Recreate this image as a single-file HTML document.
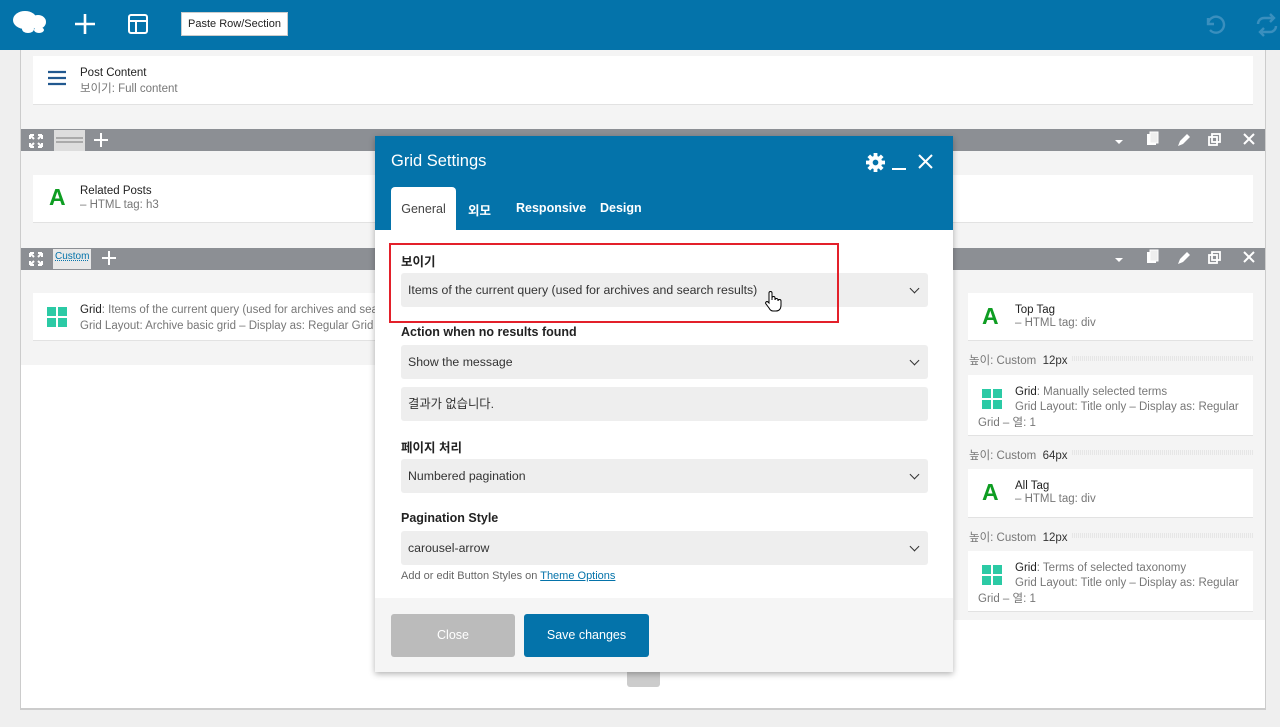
<!DOCTYPE html>
<html><head><meta charset="utf-8"><style>
*{box-sizing:border-box;margin:0;padding:0}
body{width:1280px;height:727px;overflow:hidden;background:#efefef;font-family:"Liberation Sans","Noto Sans CJK KR",sans-serif;font-size:12px;color:#333;position:relative}
.a{position:absolute}
.top{left:0;top:0;width:1280px;height:50px;background:#0473aa}
.bar{background:#8c8f94;height:22px}
.card{background:#fff;border-bottom:1px solid #e2e2e2}
.t{font-size:11.5px;color:#222}
.s{font-size:11.5px;color:#777}
.sel{background:#eee;border-radius:3px;font-size:12.3px;color:#333;padding-left:7px;line-height:34px;height:34px;width:527px;left:401px}
.sel:after{content:"";position:absolute;right:10px;top:12px;width:6px;height:6px;border-right:1.5px solid #333;border-bottom:1.5px solid #333;transform:rotate(45deg)}
.lbl{font-size:12.5px;color:#222;left:401px;font-weight:bold}
.gi{width:20px;height:20px;display:grid;grid-template-columns:1fr 1fr;gap:2px}
.gi i{background:#2bcaa5}
.A{font-family:"Liberation Sans",sans-serif;font-weight:bold;color:#0e9d22;font-size:23px}
.sp{font-size:11.5px;color:#777}
.sp b{color:#333;font-weight:normal}
.dots{height:5px;background:repeating-linear-gradient(90deg,#e6e6e6 0 1px,transparent 1px 2px)}
</style></head><body>
<div class="a top"></div>
<svg class="a" style="left:12px;top:9px" width="36" height="28" viewBox="0 0 36 28"><ellipse cx="13" cy="11" rx="12" ry="9" fill="#fff"/><ellipse cx="26" cy="13" rx="8" ry="7" fill="#fff"/><ellipse cx="16" cy="20" rx="6" ry="4" fill="#fff"/><ellipse cx="27" cy="21" rx="5" ry="3" fill="#fff"/></svg>
<svg class="a" style="left:74px;top:13px" width="22" height="22"><path d="M11 1v20M1 11h20" stroke="#fff" stroke-width="2.6"/></svg>
<svg class="a" style="left:127px;top:13px" width="22" height="22"><rect x="2" y="2" width="18" height="18" rx="2" fill="none" stroke="#fff" stroke-width="2"/><path d="M2 8h18M9 8v12" stroke="#fff" stroke-width="2"/></svg>
<div class="a" style="left:181px;top:12px;width:107px;height:24px;background:#fff;border:1px solid #ccc;font-size:11px;line-height:23px;text-align:center;color:#222">Paste Row/Section</div>
<svg class="a" style="left:1201px;top:12px" width="26" height="26"><path d="M7 6v6h6M7 12a8 8 0 1 1 2 6" fill="none" stroke="#3a8fbe" stroke-width="2.4"/></svg>
<svg class="a" style="left:1254px;top:12px" width="26" height="26"><path d="M4 12a6 6 0 0 1 6-6h10M16 2l4 4-4 4M22 14a6 6 0 0 1-6 6H6M10 24l-4-4 4-4" fill="none" stroke="#3a8fbe" stroke-width="2.4"/></svg>

<div class="a" style="left:20px;top:50px;width:1246px;height:660px;background:#fff;border-left:1px solid #ccc;border-right:1px solid #ccc;border-bottom:2px solid #ccc"></div>
<div class="a" style="left:21px;top:50px;width:1244px;height:79px;background:#f4f4f4"></div>
<div class="a card" style="left:33px;top:56px;width:1220px;height:49px"></div>
<svg class="a" style="left:48px;top:70px" width="20" height="18"><path d="M0 2h18M0 8h18M0 14h18" stroke="#21588f" stroke-width="2.2"/></svg>
<div class="a t" style="left:80px;top:67px">Post Content</div>
<div class="a s" style="left:80px;top:80px">보이기: Full content</div>

<div class="a bar" style="left:21px;top:129px;width:1244px"></div>
<svg class="a" style="left:29px;top:134px" width="14" height="14"><path d="M1 1l4 4M13 1l-4 4M1 13l4-4M13 13l-4-4M1 1h4M1 1v4M13 1h-4M13 1v4M1 13h4M1 13v-4M13 13h-4M13 13v-4" stroke="#fff" stroke-width="2"/></svg>
<div class="a" style="left:54px;top:130px;width:31px;height:21px;background:#ddd"><div style="margin:7px 2px;height:6px;border-top:2px solid #aaa;border-bottom:2px solid #aaa"></div></div>
<svg class="a" style="left:94px;top:133px" width="14" height="14"><path d="M7 0v14M0 7h14" stroke="#fff" stroke-width="2"/></svg>
<div class="a" style="left:21px;top:151px;width:1244px;height:97px;background:#f4f4f4"></div>
<div class="a card" style="left:33px;top:175px;width:1220px;height:48px"></div>
<div class="a A" style="left:49px;top:184px">A</div>
<div class="a t" style="left:80px;top:185px">Related Posts</div>
<div class="a s" style="left:80px;top:199px">– HTML tag: h3</div>

<div class="a bar" style="left:21px;top:248px;width:1244px"></div>
<svg class="a" style="left:29px;top:252px" width="14" height="14"><path d="M1 1l4 4M13 1l-4 4M1 13l4-4M13 13l-4-4M1 1h4M1 1v4M13 1h-4M13 1v4M1 13h4M1 13v-4M13 13h-4M13 13v-4" stroke="#fff" stroke-width="2"/></svg>
<div class="a" style="left:53px;top:249px;width:38px;height:20px;background:#e8e8e8;font-size:10px;color:#0473aa;text-decoration:underline dotted;padding:2px 2px">Custom</div>
<svg class="a" style="left:102px;top:251px" width="14" height="14"><path d="M7 0v14M0 7h14" stroke="#fff" stroke-width="2"/></svg>
<div class="a" style="left:21px;top:270px;width:360px;height:95px;background:#f4f4f4"></div>
<div class="a card" style="left:33px;top:293px;width:350px;height:48px;overflow:hidden"></div>
<div class="a gi" style="left:47px;top:307px"><i></i><i></i><i></i><i></i></div>
<div class="a" style="left:80px;top:304px;width:295px;overflow:hidden;white-space:nowrap">
<div class="t"><span style="color:#222">Grid</span><span style="color:#777">: Items of the current query (used for archives and search results)</span></div>
<div class="s" style="margin-top:1px">Grid Layout: Archive basic grid – Display as: Regular Grid – 열: 2</div></div>

<svg class="a" style="left:1112px;top:130px;width:160px;height:20px" viewBox="0 0 160 20"><path d="M3 10h8l-4 4z" fill="#fff"/><rect x="35" y="4" width="9" height="11" fill="#fff"/><rect x="38" y="2" width="8" height="11" fill="#eee" stroke="#fff"/><path d="M66 16l2-5 7-7 3 3-7 7z" fill="#fff"/><rect x="97" y="7" width="8" height="8" fill="none" stroke="#fff" stroke-width="1.8"/><rect x="100" y="4" width="8" height="8" fill="none" stroke="#fff" stroke-width="1.8"/><path d="M132 4l10 10M142 4l-10 10" stroke="#fff" stroke-width="2"/></svg>
<svg class="a" style="left:1112px;top:248px;width:160px;height:20px" viewBox="0 0 160 20"><path d="M3 10h8l-4 4z" fill="#fff"/><rect x="35" y="4" width="9" height="11" fill="#fff"/><rect x="38" y="2" width="8" height="11" fill="#eee" stroke="#fff"/><path d="M66 16l2-5 7-7 3 3-7 7z" fill="#fff"/><rect x="97" y="7" width="8" height="8" fill="none" stroke="#fff" stroke-width="1.8"/><rect x="100" y="4" width="8" height="8" fill="none" stroke="#fff" stroke-width="1.8"/><path d="M132 4l10 10M142 4l-10 10" stroke="#fff" stroke-width="2"/></svg>

<div class="a" style="left:954px;top:270px;width:311px;height:350px;background:#f4f4f4"></div>
<div class="a card" style="left:968px;top:293px;width:285px;height:48px"></div>
<div class="a A" style="left:982px;top:303px">A</div>
<div class="a t" style="left:1015px;top:304px">Top Tag</div>
<div class="a s" style="left:1015px;top:317px">– HTML tag: div</div>
<div class="a sp" style="left:969px;top:352px">높이: Custom &nbsp;<b>12px</b></div>
<div class="a dots" style="left:1072px;top:356px;width:181px"></div>
<div class="a card" style="left:968px;top:375px;width:285px;height:61px"></div>
<div class="a gi" style="left:982px;top:389px"><i></i><i></i><i></i><i></i></div>
<div class="a t" style="left:1015px;top:386px"><span>Grid</span><span style="color:#777">: Manually selected terms</span></div>
<div class="a s" style="left:1015px;top:401px">Grid Layout: Title only – Display as: Regular</div>
<div class="a s" style="left:978px;top:414px">Grid – 열: 1</div>
<div class="a sp" style="left:969px;top:447px">높이: Custom &nbsp;<b>64px</b></div>
<div class="a dots" style="left:1072px;top:450px;width:181px"></div>
<div class="a card" style="left:968px;top:469px;width:285px;height:49px"></div>
<div class="a A" style="left:982px;top:479px">A</div>
<div class="a t" style="left:1015px;top:480px">All Tag</div>
<div class="a s" style="left:1015px;top:493px">– HTML tag: div</div>
<div class="a sp" style="left:969px;top:529px">높이: Custom &nbsp;<b>12px</b></div>
<div class="a dots" style="left:1072px;top:533px;width:181px"></div>
<div class="a card" style="left:968px;top:551px;width:285px;height:61px"></div>
<div class="a gi" style="left:982px;top:565px"><i></i><i></i><i></i><i></i></div>
<div class="a t" style="left:1015px;top:562px"><span>Grid</span><span style="color:#777">: Terms of selected taxonomy</span></div>
<div class="a s" style="left:1015px;top:577px">Grid Layout: Title only – Display as: Regular</div>
<div class="a s" style="left:978px;top:590px">Grid – 열: 1</div>

<div class="a" style="left:627px;top:660px;width:33px;height:27px;background:#ccc;border-radius:3px"></div>

<div class="a" style="left:375px;top:136px;width:578px;height:536px;background:#fff;box-shadow:0 2px 6px rgba(0,0,0,.3)"></div>
<div class="a" style="left:375px;top:136px;width:578px;height:94px;background:#0473aa"></div>
<div class="a" style="left:391px;top:152px;font-size:16.5px;color:#fff">Grid Settings</div>
<svg class="a" style="left:866px;top:153px" width="19" height="19" viewBox="0 0 20 20"><g fill="#fff"><circle cx="10" cy="10" r="7"/><rect x="8" y="0" width="4" height="20"/><rect x="0" y="8" width="20" height="4"/><rect x="8" y="0" width="4" height="20" transform="rotate(45 10 10)"/><rect x="8" y="0" width="4" height="20" transform="rotate(-45 10 10)"/></g><circle cx="10" cy="10" r="3" fill="#0473aa"/></svg>
<div class="a" style="left:892px;top:168px;width:14px;height:2px;background:#fff"></div>
<svg class="a" style="left:918px;top:154px" width="15" height="15"><path d="M1 1l13 13M14 1L1 14" stroke="#fff" stroke-width="2"/></svg>
<div class="a" style="left:391px;top:187px;width:65px;height:44px;background:#fff;border-radius:4px 4px 0 0;font-size:12.5px;color:#444;text-align:center;line-height:44px">General</div>
<div class="a" style="left:468px;top:200px;font-size:12.5px;color:#fff;font-weight:bold">외모</div>
<div class="a" style="left:516px;top:201px;font-size:12.5px;color:#fff;font-weight:bold">Responsive</div>
<div class="a" style="left:600px;top:201px;font-size:12.5px;color:#fff;font-weight:bold">Design</div>

<div class="a lbl" style="top:251px">보이기</div>
<div class="a sel" style="top:273px">Items of the current query (used for archives and search results)</div>
<div class="a" style="left:389px;top:243px;width:450px;height:80px;border:2px solid #e3202a"></div>
<svg class="a" style="left:764px;top:290px" width="18" height="22" viewBox="0 0 18 22"><path d="M5 13V3a1.5 1.5 0 0 1 3 0v7V8a1.5 1.5 0 0 1 3 0v2a1.5 1.5 0 0 1 3 0v1a1.5 1.5 0 0 1 3 0v4c0 4-2 6-5 6H9c-2 0-3-1-4-3L2 14a1.4 1.4 0 0 1 2-2z" fill="#fff" stroke="#000" stroke-width="1"/></svg>
<div class="a lbl" style="top:325px">Action when no results found</div>
<div class="a sel" style="top:345px">Show the message</div>
<div class="a" style="left:401px;top:387px;width:527px;height:34px;background:#eee;border-radius:3px;font-size:12.3px;line-height:34px;padding-left:7px">결과가 없습니다.</div>
<div class="a lbl" style="top:437px">페이지 처리</div>
<div class="a sel" style="top:459px">Numbered pagination</div>
<div class="a lbl" style="top:511px">Pagination Style</div>
<div class="a sel" style="top:531px">carousel-arrow</div>
<div class="a" style="left:401px;top:570px;font-size:11px;color:#666">Add or edit Button Styles on <span style="color:#0473aa;text-decoration:underline">Theme Options</span></div>
<div class="a" style="left:375px;top:598px;width:578px;height:74px;background:#f5f5f5"></div>
<div class="a" style="left:391px;top:614px;width:124px;height:43px;background:#bbb;border-radius:3px;color:#fff;font-size:12.5px;text-align:center;line-height:43px">Close</div>
<div class="a" style="left:524px;top:614px;width:125px;height:43px;background:#0473aa;border-radius:3px;color:#fff;font-size:12.5px;text-align:center;line-height:43px">Save changes</div>
</body></html>
